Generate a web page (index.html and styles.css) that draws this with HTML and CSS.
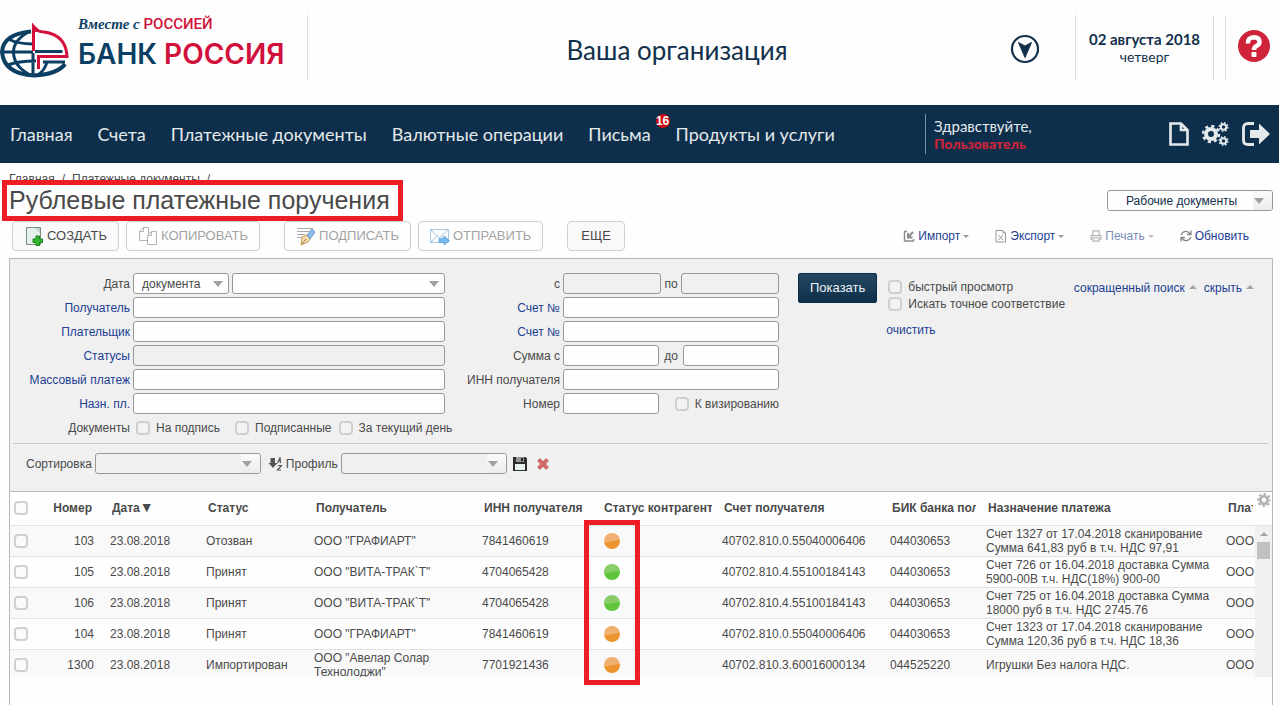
FILE: index.html
```html
<!DOCTYPE html>
<html lang="ru">
<head>
<meta charset="utf-8">
<meta name="viewport" content="width=device-width, initial-scale=1">
<title>Рублевые платежные поручения</title>
<link rel="stylesheet" href="styles.css">
</head>
<body>
<header class="header">
  <a class="brand" href="#">
    <svg class="brand-mark" viewBox="0 0 69 56" aria-hidden="true">
      <g fill="none" stroke="#0b3f63" stroke-width="3">
        <path d="M31 8.500Q3 11 2 29Q4 51 34 52.500Q58 51 65 41" stroke-width="4"/>
        <path d="M30 8Q13.500 17 13.500 29Q13.500 43 30 52"/>
        <path d="M3 29H33M8 16Q18 21 33 21M8 42Q18 38 36 38M33 30V52"/>
        <path d="M35 28.500H62.500M43 39H65M47 39Q45 47 38 52"/>
      </g>
      <path d="M33.500 28V4Q37 9 44 9Q66 12 67 33.500H38.500V46" fill="none" stroke="#d2103c" stroke-width="3"/>
      <path d="M32 0L40 7.500L33 10Z" fill="#d2103c"/>
    </svg>
    <span class="brand-text">
      <span class="brand-motto"><i>Вместе с</i> <b>РОССИЕЙ</b></span>
      <span class="brand-name">БАНК <b>РОССИЯ</b></span>
    </span>
  </a>
  <div class="org">Ваша организация</div>
  <button class="round-btn" type="button" aria-label="Выбрать организацию">
    <svg viewBox="0 0 30 30"><circle cx="15" cy="15" r="13" fill="none" stroke="#12304b" stroke-width="2.200"/><path d="M8.500 8.500L15 12L21.500 8.500L15 23.500Z" fill="#12304b" stroke="#12304b" stroke-linejoin="round"/></svg>
  </button>
  <div class="date"><b>02 августа 2018</b><span>четверг</span></div>
  <a class="help" href="#" aria-label="Помощь">
    <svg viewBox="0 0 32 32"><circle cx="16" cy="16" r="16" fill="#cf2339"/><path d="M10 13.500Q9.500 7.500 16 7.200Q21.500 7.300 21.500 12Q21.500 14.500 18.500 16Q16 17.200 16 20" fill="none" stroke="#fff" stroke-width="4.500"/><rect x="13.500" y="22" width="5" height="5" rx="1" fill="#fff"/></svg>
  </a>
</header>

<nav class="nav">
  <a href="#">Главная</a>
  <a href="#">Счета</a>
  <a href="#">Платежные документы</a>
  <a href="#">Валютные операции</a>
  <a class="has-badge" href="#">Письма<span class="badge">16</span></a>
  <a href="#">Продукты и услуги</a>
  <div class="user">Здравствуйте,<b>Пользователь</b></div>
  <div class="nav-icons">
    <button type="button" aria-label="Документ"><svg class="i-doc" viewBox="0 0 20 24"><path d="M1.500 1.500H12L18.500 8V22.500H1.500Z M12 1.500V8H18.500" fill="none" stroke="#e4e9ec" stroke-width="2.600"/></svg></button>
    <button type="button" aria-label="Настройки"><svg class="i-gears" viewBox="0 0 27 24" fill="none" stroke="#e4e9ec"><circle cx="9" cy="12" r="5" stroke-width="4"/><circle cx="9" cy="12" r="8" stroke-width="2.400" stroke-dasharray="3.200 3.083"/><circle cx="21.500" cy="5" r="2.700" stroke-width="2"/><circle cx="21.500" cy="5" r="4.300" stroke-width="1.400" stroke-dasharray="1.700 1.677"/><circle cx="21.500" cy="19" r="2.700" stroke-width="2"/><circle cx="21.500" cy="19" r="4.300" stroke-width="1.400" stroke-dasharray="1.700 1.677"/></svg></button>
    <button type="button" aria-label="Выход"><svg class="i-exit" viewBox="0 0 28 24"><path d="M12 1.500H6Q1.500 1.500 1.500 6V18Q1.500 22.500 6 22.500H12" fill="none" stroke="#e4e9ec" stroke-width="2.800"/><path d="M8 8H17V1.500L28 12L17 22.500V16H8Z" fill="#e4e9ec"/></svg></button>
  </div>
</nav>

<main class="page">
  <div class="titlebar">
    <div>
      <div class="crumbs"><a href="#">Главная</a><span>/</span><a href="#">Платежные документы</a><span>/</span></div>
      <h1 class="title">Рублевые платежные поручения</h1>
    </div>
    <span class="select select-docs tab"><select aria-label="Вид документов"><option>Рабочие документы</option></select></span>
  </div>

  <div class="toolbar">
    <button class="tool" type="button"><svg viewBox="0 0 20 20"><path d="M2.500 1.500H16.500V18.500H2.500Z" fill="#e4f0e9" stroke="#75917f"/><path d="M11 2L16 7V2Z" fill="#bfd0cf"/><path d="M12 10H15.500V13H18.500V16.500H15.500V19.500H12V16.500H9V13H12Z" fill="#32b72f" stroke="#148018"/></svg>СОЗДАТЬ</button>
    <button class="tool off" type="button" disabled><svg viewBox="0 0 20 20" fill="#fff" stroke="#b4b4b4"><path d="M5.500 1.500H10.500V14.500H1.500V5.500Z M5.500 1.500V5.500H1.500"/><path d="M13.500 5.500H18.500V18.500H9.500V9.500Z M13.500 5.500V9.500H9.500"/></svg>КОПИРОВАТЬ</button>
    <button class="tool off sign" type="button" disabled><svg viewBox="0 0 20 20"><path d="M1 2.500H17M1 5.500H15M1 8.500H9M1 11.500H7" stroke="#aaa" fill="none"/><path d="M6 11L11 9L14 13L12 16L5 19Z" fill="#f6dcae" stroke="#c99a52"/><path d="M6 18L10 13" stroke="#90714a"/><path d="M11 9L16 3L19 6L14 13Z" fill="#8cbcea" stroke="#6f9ccc"/></svg>ПОДПИСАТЬ</button>
    <button class="tool off" type="button" disabled><svg viewBox="0 0 20 20"><path d="M.5 3.500H18.500V16.500H.5Z" fill="#f8fbfd" stroke="#a9c9df"/><path d="M1 4L9.500 12L18 4M1 16L7 10M18 16L12 10" fill="none" stroke="#a9c9df"/><path d="M9 12.500H14V10L19.500 14.500L14 19V16.500H9Z" fill="#75b9ed" stroke="#5499d0" stroke-width=".6"/></svg>ОТПРАВИТЬ</button>
    <button class="tool more" type="button">ЕЩЕ</button>
    <div class="actions">
      <a href="#"><svg viewBox="0 0 12 14" fill="none" stroke="#8d8d8d" stroke-width="1.400"><path d="M4 2.500H1.500V12H10.500V10"/><path d="M5 4V8.500H9.500M10 3L5.500 8" stroke-width="2"/></svg>Импорт<i class="down"></i></a>
      <a href="#"><svg viewBox="0 0 12 14" fill="none" stroke="#999"><path d="M1 1.500H8L10.500 4V13H1Z M8 1.500V4H10.500M3.500 6L8 11M8 6L3.500 11"/></svg>Экспорт<i class="down"></i></a>
      <a class="dim" href="#"><svg viewBox="0 0 13 13" fill="none" stroke="#888" stroke-width="1.300"><path d="M3 6V1H10V6M3 10H1V6H12V10H10M3 8.500H10V12H3Z"/></svg>Печать<i class="down"></i></a>
      <a href="#"><svg viewBox="0 0 12 12" fill="none" stroke="#888" stroke-width="1.300"><path d="M1 5Q3 1 6 1.300Q8.500 1.500 10.500 4M11 .5V4.500H7M11 7Q9 11 6 10.700Q3.500 10.500 1.500 8M1 11.500V7.500H5"/></svg>Обновить</a>
    </div>
  </div>

  <section class="panel">
    <div class="filter">
      <div class="filter-main">
        <form class="fields">
          <label for="dt">Дата</label>
          <div class="cell"><span class="select w-doc"><select id="dt"><option>документа</option></select></span><span class="select grow"><select aria-label="Период"><option></option></select></span></div>
          <label for="from">с</label>
          <div class="cell"><input class="box grow off" id="from" disabled><label for="to">по</label><input class="box grow off" id="to" disabled></div>

          <label class="blue" for="rcv">Получатель</label><input class="box" id="rcv">
          <label class="blue" for="acc1">Счет №</label><input class="box" id="acc1">

          <label class="blue" for="pay">Плательщик</label><input class="box" id="pay">
          <label class="blue" for="acc2">Счет №</label><input class="box" id="acc2">

          <label class="blue" for="st">Статусы</label><input class="box off" id="st" disabled>
          <label for="sum1">Сумма с</label>
          <div class="cell split"><input class="box half" id="sum1"><label for="sum2">до</label><input class="box half" id="sum2"></div>

          <label class="blue" for="mass">Массовый платеж</label><input class="box" id="mass">
          <label for="inn">ИНН получателя</label><input class="box" id="inn">

          <label class="blue" for="purp">Назн. пл.</label><input class="box" id="purp">
          <label for="num">Номер</label>
          <div class="cell split"><input class="box half" id="num"><label class="check"><input type="checkbox">К визированию</label></div>

          <span class="caption">Документы</span>
          <div class="docs"><label class="check"><input type="checkbox">На подпись</label><label class="check"><input type="checkbox">Подписанные</label><label class="check"><input type="checkbox">За текущий день</label></div>
        </form>
        <button class="show" type="button">Показать</button>
        <div class="options">
          <label class="check"><input type="checkbox">быстрый просмотр</label>
          <label class="check"><input type="checkbox">Искать точное соответствие</label>
          <a class="clear" href="#">очистить</a>
        </div>
        <div class="toggles"><a href="#">сокращенный поиск<i class="up"></i></a><a href="#">скрыть<i class="up"></i></a></div>
      </div>
      <div class="profile">
        <label for="sort">Сортировка</label><span class="select tab off wide"><select id="sort"><option></option></select></span>
        <button class="icon-btn sort" type="button" aria-label="Порядок"><svg viewBox="0 0 15 14"><path d="M2.500 1H7V6H9.500L5 11L.5 6H2.500Z" fill="#555"/><path d="M9.500 6L12 .7L12.500 6M10 4H13M10 8.500H13.500L9.500 13H13" fill="none" stroke="#555" stroke-width="1.200"/></svg></button>
        <label for="prof">Профиль</label><span class="select tab off wide"><select id="prof"><option></option></select></span>
        <button class="icon-btn save" type="button" aria-label="Сохранить"><svg viewBox="0 0 14 14"><path d="M0 0H12.500L14 1.500V14H0Z" fill="#2d2d2d"/><path d="M3 0H11V5H3Z" fill="#999"/><path d="M8 1H10V4H8Z" fill="#222"/><path d="M2 7H12V13H2Z" fill="#e8f0f2"/></svg></button>
        <button class="icon-btn remove" type="button" aria-label="Удалить"><svg viewBox="0 0 12 12"><path d="M1.500 1.500L10.500 10.500M10.500 1.500L1.500 10.500" stroke="#d06a6a" stroke-width="4"/></svg></button>
      </div>
    </div>

    <div class="grid">
      <table class="table">
        <colgroup><col class="c-check"><col class="c-num"><col class="c-date"><col class="c-status"><col class="c-rcv"><col class="c-inn"><col class="c-inn"><col class="c-rcv"><col class="c-date"><col><col class="c-payer"></colgroup>
        <thead>
          <tr><th><input type="checkbox" aria-label="Выбрать все"></th><th class="num"><span>Номер</span></th><th><span>Дата<b class="sorted">▼</b></span></th><th><span>Статус</span></th><th><span>Получатель</span></th><th><span>ИНН получателя</span></th><th><span>Статус контрагент</span></th><th><span>Счет получателя</span></th><th><span>БИК банка пол</span></th><th><span>Назначение платежа</span></th><th><span>Плат</span></th></tr>
        </thead>
        <tbody>
          <tr><td><input type="checkbox" aria-label="103"></td><td class="num">103</td><td>23.08.2018</td><td>Отозван</td><td>ООО "ГРАФИАРТ"</td><td>7841460619</td><td><span class="dot orange"></span></td><td>40702.810.0.55040006406</td><td>044030653</td><td>Счет 1327 от 17.04.2018 сканирование<br>Сумма 641,83 руб в т.ч. НДС 97,91</td><td>ООО</td></tr>
          <tr><td><input type="checkbox" aria-label="105"></td><td class="num">105</td><td>23.08.2018</td><td>Принят</td><td>ООО "ВИТА-ТРАК`Т"</td><td>4704065428</td><td><span class="dot green"></span></td><td>40702.810.4.55100184143</td><td>044030653</td><td>Счет 726 от 16.04.2018 доставка Сумма<br>5900-00В т.ч. НДС(18%) 900-00</td><td>ООО</td></tr>
          <tr><td><input type="checkbox" aria-label="106"></td><td class="num">106</td><td>23.08.2018</td><td>Принят</td><td>ООО "ВИТА-ТРАК`Т"</td><td>4704065428</td><td><span class="dot green"></span></td><td>40702.810.4.55100184143</td><td>044030653</td><td>Счет 725 от 16.04.2018 доставка Сумма<br>18000 руб в т.ч. НДС 2745.76</td><td>ООО</td></tr>
          <tr><td><input type="checkbox" aria-label="104"></td><td class="num">104</td><td>23.08.2018</td><td>Принят</td><td>ООО "ГРАФИАРТ"</td><td>7841460619</td><td><span class="dot orange"></span></td><td>40702.810.0.55040006406</td><td>044030653</td><td>Счет 1323 от 17.04.2018 сканирование<br>Сумма 120,36 руб в т.ч. НДС 18,36</td><td>ООО</td></tr>
          <tr><td><input type="checkbox" aria-label="1300"></td><td class="num">1300</td><td>23.08.2018</td><td>Импортирован</td><td>ООО "Авелар Солар<br>Технолоджи"</td><td>7701921436</td><td><span class="dot orange"></span></td><td>40702.810.3.60016000134</td><td>044525220</td><td>Игрушки Без налога НДС.</td><td>ООО</td></tr>
        </tbody>
      </table>
      <div class="side">
        <button class="gear" type="button" aria-label="Настройка столбцов"><svg viewBox="0 0 14 14" fill="none" stroke="#b5b5b5"><circle cx="7" cy="7" r="3.700" stroke-width="3"/><circle cx="7" cy="7" r="6" stroke-width="2" stroke-dasharray="2.400 2.312" stroke-dashoffset="1.200"/></svg></button>
        <div class="scroll"><i class="up"></i><span class="thumb"></span></div>
      </div>
    </div>
    <div class="mark"></div>
  </section>
</main>
</body>
</html>
```
FILE: styles.css
```css
* { box-sizing: border-box; }
body { margin: 0; min-height: 100vh; display: flex; flex-direction: column; overflow: hidden; background: #fefefe; color: #4a4a4a; font: 12px/14px "Liberation Sans", Arial, sans-serif; }
a { color: #1c3f94; text-decoration: none; }
button { margin: 0; padding: 0; border: 0; background: none; font: inherit; color: inherit; }
svg { display: block; }

.header { display: flex; align-items: flex-start; height: 105px; padding-top: 15px; color: #12304b; font-family: Lato, "Open Sans", sans-serif; }
.brand { display: flex; width: 308px; height: 65px; border-right: 1px solid #dcdcdc; color: #0b3f63; }
.brand-mark { flex: none; width: 69px; height: 56px; margin-top: 8px; }
.brand-text { display: flex; flex-direction: column; margin-left: 9px; white-space: nowrap; }
.brand-motto { font: 500 15px/18px Roboto, sans-serif; }
.brand-motto i { font: italic bold 15px/18px "Liberation Serif", serif; }
.brand-motto b { font-weight: 500; }
.brand-name { margin-top: 4px; font: 600 28px/34px Inter, sans-serif; }
.brand b { color: #d2103c; }
.brand-name b { font-weight: 600; }
.org { flex: 1; padding: 20px 0 0 36px; text-align: center; font-size: 26px; line-height: 30px; }
.round-btn { width: 30px; margin: 19px 35px 0 0; }
.date { display: flex; flex-direction: column; width: 139px; height: 65px; padding-top: 15px; border: solid #dcdcdc; border-width: 0 1px; text-align: center; font-size: 14px; line-height: 18px; }
.date b { font-size: 15px; }
.help { height: 65px; margin-left: 11px; padding: 15px 9px 0 12px; border-left: 1px solid #dcdcdc; }
.help svg { width: 32px; height: 32px; }

.nav { display: flex; align-items: center; gap: 25px; height: 58px; padding: 0 9px 0 10px; background: #0d2f4b; color: #e4e9ec; font: 18px/22px Lato, "Open Sans", sans-serif; white-space: nowrap; }
.nav a { color: inherit; }
.has-badge { position: relative; }
.badge { position: absolute; top: -9px; left: 100%; width: 14px; height: 14px; margin-left: 5px; border-radius: 7px; background: #cc0a14; color: #fff; font: bold 12px/14px "Liberation Sans", sans-serif; text-align: center; }
.user { display: flex; flex-direction: column; width: 244px; height: 40px; margin-left: auto; padding: 4px 0 0 8px; border-left: 1px solid #7d8f9d; font-size: 15px; line-height: 17px; }
.user b { color: #cf2339; font-size: 14px; font-weight: 900; }
.nav-icons { display: flex; align-items: center; gap: 13px; margin-left: -25px; }
.i-doc { width: 20px; height: 24px; }
.i-gears { width: 27px; height: 24px; }
.i-exit { width: 28px; height: 24px; }

.page { display: flex; flex: 1; flex-direction: column; padding: 9px 6px 0 9px; }
.titlebar { display: flex; align-items: flex-end; justify-content: space-between; height: 49px; }
.crumbs { display: flex; gap: 7px; }
.crumbs a, .crumbs { color: #4a4a4a; }
.title { position: relative; width: 401px; height: 41px; margin: -6px 0 0 -7px; padding-left: 2px; border: 5px solid #ee1c24; background: #fefefe; font-size: 25px; font-weight: normal; line-height: 31px; white-space: nowrap; }

.select { position: relative; display: block; height: 21px; }
.select select { width: 100%; height: 21px; padding: 0 8px; border: 1px solid #989898; border-radius: 3px; appearance: none; background: #fefefe; color: #4a4a4a; font: inherit; }
.select::after { content: ""; position: absolute; top: 8px; right: 6px; border: solid transparent; border-width: 6px 5px 0; border-top-color: #a0a0a0; pointer-events: none; }
.tab::before { content: ""; position: absolute; top: 1px; right: 1px; width: 19px; height: 19px; border-radius: 2px; background: linear-gradient(#fbfbfb, #ececec); pointer-events: none; }
.tab::after { right: 9px; }
.select.off select, .off { background: #f0f0f0; }
.select-docs { width: 166px; margin-bottom: 10px; }
.select-docs select { padding-left: 18px; color: #12304b; }
.wide { width: 166px; }

.toolbar { display: flex; align-items: center; height: 30px; padding-left: 3px; }
.tool { display: flex; align-items: center; gap: 3px; height: 30px; margin-right: 7px; padding: 0 11px; border: 1px solid #cdcfd1; border-radius: 4px; background: #f9f9fa; font-size: 13px; line-height: 20px; white-space: nowrap; }
.tool svg { width: 20px; height: 20px; }
.tool.off { background: #fefefe; color: #a3a3a3; }
.sign { margin-left: 17px; }
.more { margin-left: 17px; padding: 0 13px; }
.actions { display: flex; gap: 26px; margin-left: auto; padding-right: 24px; }
.actions a { display: flex; align-items: center; gap: 3px; }
.actions svg { width: 12px; height: 14px; }
.dim { opacity: .6; }
.down, .up { display: inline-block; border: solid transparent; border-width: 3px 3px 0; border-top-color: #999; }
.up { border-width: 0 4px 4px; border-bottom-color: #a5a5a5; }

.panel { position: relative; display: flex; flex: 1; flex-direction: column; margin-top: 7px; border: 1px solid #b9b9b9; border-bottom: 0; }
.filter { padding: 14px 4px 17px 3px; border-bottom: 1px solid #b9b9b9; background: #f0f0f0; }
.filter-main { display: flex; align-items: flex-start; padding-bottom: 5px; border-bottom: 1px solid #c9c9c9; }
.fields { display: grid; grid-template-columns: 117px 312px 112px 216px; grid-auto-rows: 21px; gap: 3px; align-items: center; }
.fields > label, .caption { text-align: right; white-space: nowrap; }
.blue { color: #1c3f94; }
.cell { display: flex; align-items: center; gap: 3px; }
.split { justify-content: space-between; }
.grow { flex: 1; min-width: 0; }
.w-doc { width: 96px; }
.box { width: 100%; height: 21px; padding: 0 4px; border: 1px solid #989898; border-radius: 3px; background: #fefefe; font: inherit; }
.box.off { background: #f0f0f0; }
.box.half { width: 96px; }
.check { display: flex; align-items: center; gap: 6px; white-space: nowrap; }
.docs { display: flex; gap: 7px; padding-left: 3px; white-space: nowrap; }
.docs .check:first-child { margin-right: 8px; }
input[type="checkbox"] { flex: none; width: 14px; height: 14px; margin: 0; border: 2px solid #d0d0d0; border-radius: 4px; appearance: none; background: #f3f3f3; }
.show { height: 30px; margin-left: 19px; padding: 0 11px; border: 1px solid #0d2c45; border-radius: 2px; background: linear-gradient(#254862, #0d2f4b); color: #eef2f4; font-size: 13px; }
.options { display: flex; flex-direction: column; gap: 3px; margin: 7px 0 0 11px; }
.clear { margin: 9px 0 0 -2px; }
.toggles { display: flex; gap: 7px; margin: 8px 14px 0 auto; white-space: nowrap; }
.toggles .up { margin-left: 4px; vertical-align: 3px; }
.profile { display: flex; align-items: center; gap: 3px; padding: 9px 0 0 13px; }
.sort { margin-left: 4px; }
.sort svg { width: 15px; height: 14px; }
.save { margin-left: 3px; }
.save svg { width: 14px; height: 14px; }
.remove { margin-left: 7px; }
.remove svg { width: 12px; height: 12px; }

.grid { display: flex; height: 185px; overflow: hidden; }
.table { flex: 1; width: 100%; min-width: 0; height: 100%; border-collapse: separate; border-spacing: 0; table-layout: fixed; }
.c-check { width: 24px; }
.c-num { width: 70px; }
.c-date { width: 96px; }
.c-status { width: 108px; }
.c-rcv { width: 168px; }
.c-inn { width: 120px; }
.c-payer { width: 35px; }
.table th { height: 34px; padding: 0 4px 2px 8px; border-bottom: 1px solid #e2e2e2; text-align: left; white-space: nowrap; }
.table th:last-child { padding-right: 2px; }
.table th span { display: block; overflow: hidden; }
.table td { height: 31px; padding: 0 0 0 6px; border-bottom: 1px solid #e2e2e2; overflow: hidden; white-space: nowrap; }
.table th:first-child, .table td:first-child { padding-left: 4px; }
.table tr > :first-child input { display: block; background: #fbfbfb; }
.table .num { padding-right: 10px; text-align: right; }
.table th.num { padding-right: 12px; }
.sorted { font-size: 14px; }
.table tbody tr:nth-child(odd) { background: #f9f9f9; }
.dot { display: block; width: 16px; height: 16px; margin-left: 2px; border-radius: 8px; }
.orange { background: linear-gradient(170deg, #f0b070 50%, #ec952f 52%); }
.green { background: linear-gradient(170deg, #88cd68 50%, #5fc53a 52%); }
.side { width: 17px; }
.gear { display: block; width: 17px; height: 34px; padding: 1px 1px 18px 2px; border-bottom: 1px solid #e2e2e2; }
.scroll { display: flex; flex-direction: column; align-items: center; height: 151px; padding-top: 6px; background: #f1f1f1; }
.thumb { width: 13px; height: 17px; margin-top: 6px; background: #c1c1c1; }
.mark { position: absolute; top: 261px; left: 574px; width: 56px; height: 165px; border: 5px solid #ee1c24; pointer-events: none; }
```
